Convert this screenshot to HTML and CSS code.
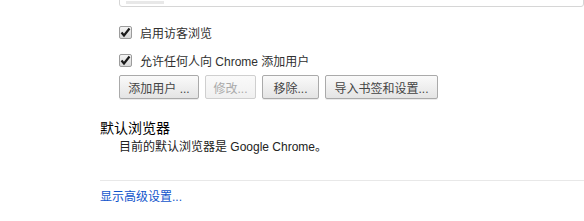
FILE: index.html
```html
<!DOCTYPE html>
<html lang="zh-CN">
<head>
    <meta charset="UTF-8">
    <title>设置</title>
    <link rel="stylesheet" href="styles.css">
</head>
<body>
    <div class="page">
        <div class="section">
            <div class="user-list">
                <div class="user-item"></div>
            </div>
            <label class="check-row">
                <span class="check">
                    <svg width="11" height="11" viewBox="0 0 11 11"><path d="M1.5 5.5 L4 8.5 L9.5 1.5" fill="none" stroke="#1a1a1a" stroke-width="2.2"/></svg>
                </span>
                启用访客浏览
            </label>
            <label class="check-row">
                <span class="check">
                    <svg width="11" height="11" viewBox="0 0 11 11"><path d="M1.5 5.5 L4 8.5 L9.5 1.5" fill="none" stroke="#1a1a1a" stroke-width="2.2"/></svg>
                </span>
                允许任何人向 Chrome 添加用户
            </label>
            <div class="buttons">
                <button class="btn btn-add">添加用户 ...</button>
                <button class="btn btn-edit" disabled>修改...</button>
                <button class="btn btn-remove">移除...</button>
                <button class="btn btn-import">导入书签和设置...</button>
            </div>
        </div>

        <h3>默认浏览器</h3>
        <div class="section">
            <p class="desc">目前的默认浏览器是 Google Chrome。</p>
        </div>

        <div class="footer">
            <a href="#">显示高级设置...</a>
        </div>
    </div>
</body>
</html>
```

FILE: styles.css
```css
body {
    margin: 0;
    font-family: "Liberation Sans", "Noto Sans CJK SC", sans-serif;
    font-size: 12px;
    color: #303030;
    background: #fff;
}

.page {
    padding-left: 100px;
}

.section {
    padding-left: 19px;
}

.user-list {
    margin-top: -20px;
    height: 25px;
    border: 1px solid #d6d6d6;
    border-radius: 3px;
    padding: 0 6px;
}

.user-item {
    margin-top: 20px;
    width: 38px;
    height: 3px;
    background: #e8e8e8;
}

.check-row {
    display: flex;
    align-items: center;
    gap: 8px;
    height: 14px;
    margin-top: 18px;
}

.check-row + .check-row {
    margin-top: 14px;
}

.check {
    width: 11px;
    height: 11px;
    border: 1px solid #9c9c9c;
    border-radius: 2px;
    background: linear-gradient(#f4f4f4, #d8d8d8);
    display: flex;
    align-items: center;
    justify-content: center;
}

.buttons {
    display: flex;
    gap: 6px;
    margin-top: 8px;
}

.btn {
    height: 24px;
    padding: 0;
    font-family: inherit;
    font-size: 12px;
    color: #444;
    border: 1px solid #aaa;
    border-radius: 2px;
    background: linear-gradient(#fafafa, #e4e4e4);
    box-shadow: 0 1px 0 rgba(0,0,0,0.08);
}

.btn-add { width: 80px; }
.btn-edit { width: 51px; }
.btn-remove { width: 57px; }
.btn-import { width: 113px; }

.btn:disabled {
    color: #aaa;
    border-color: #cfcfcf;
    background: linear-gradient(#fafafa, #f0f0f0);
    box-shadow: none;
}

h3 {
    margin: 20px 0 0;
    font-size: 14px;
    font-weight: normal;
    color: #000;
    line-height: 18px;
}

.desc {
    margin: 2px 0 0;
    line-height: 16px;
    color: #222;
}

.footer {
    margin-top: 25px;
    border-top: 1px solid #e8e8e8;
    padding-top: 8px;
    line-height: 16px;
}

.footer a {
    color: #15c;
    text-decoration: none;
    font-size: 12px;
}
```
